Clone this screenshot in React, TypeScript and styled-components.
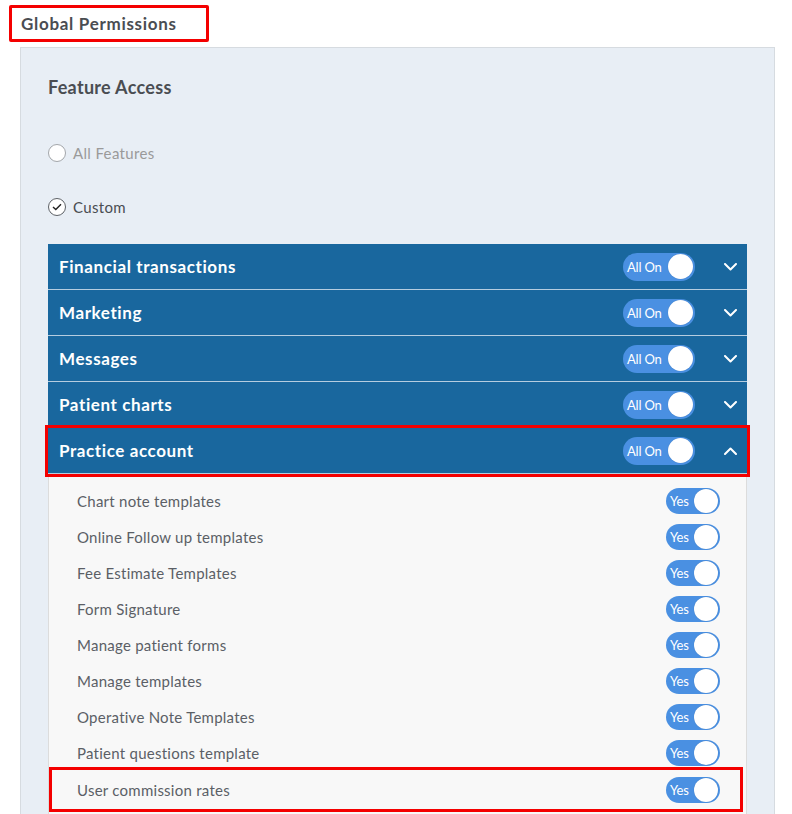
import React, { useState } from 'react';
import styled, { createGlobalStyle } from 'styled-components';

const GlobalStyle = createGlobalStyle`
  html, body {
    margin: 0;
    padding: 0;
    background: #fff;
    font-family: Lato, "Open Sans", "Liberation Sans", sans-serif;
  }
`;

interface Section {
  name: string;
  open?: boolean;
  highlight?: boolean;
}

interface Permission {
  label: string;
  highlight?: boolean;
}

const sections: Section[] = [
  { name: 'Financial transactions' },
  { name: 'Marketing' },
  { name: 'Messages' },
  { name: 'Patient charts' },
  { name: 'Practice account', open: true, highlight: true },
];

const permissions: Permission[] = [
  { label: 'Chart note templates' },
  { label: 'Online Follow up templates' },
  { label: 'Fee Estimate Templates' },
  { label: 'Form Signature' },
  { label: 'Manage patient forms' },
  { label: 'Manage templates' },
  { label: 'Operative Note Templates' },
  { label: 'Patient questions template' },
  { label: 'User commission rates', highlight: true },
];

const Page = styled.div`
  width: 792px;
  height: 814px;
  overflow: hidden;
  padding-top: 5px;
  box-sizing: border-box;
`;

const TitleBox = styled.div`
  margin-left: 9px;
  width: 200px;
  height: 37px;
  box-sizing: border-box;
  border: 3px solid #f40000;
  border-radius: 2px;
  display: flex;
  align-items: center;
  padding-left: 9px;
  font-size: 17px;
  font-weight: 700;
  letter-spacing: 0.7px;
  color: #4a4d52;
`;

const Panel = styled.div`
  margin: 5px 0 0 20px;
  width: 755px;
  min-height: 800px;
  box-sizing: border-box;
  background: #e8eef5;
  border: 1px solid #d6dbe0;
  padding: 28px 27px 0 27px;
`;

const SectionTitle = styled.div`
  font-size: 18px;
  font-weight: 700;
  letter-spacing: 0.3px;
  color: #4a4d52;
  line-height: 22px;
  margin-bottom: 44px;
`;

const RadioRow = styled.label<{ $muted?: boolean }>`
  display: flex;
  align-items: center;
  gap: 7px;
  height: 22px;
  font-size: 15px;
  letter-spacing: 0.35px;
  color: ${({ $muted }) => ($muted ? '#9a9a9a' : '#4a4d52')};
  margin-bottom: 32px;
`;

const RadioCircle = styled.span<{ $checked?: boolean }>`
  width: 18px;
  height: 18px;
  box-sizing: border-box;
  border-radius: 50%;
  background: #fff;
  border: 1px solid ${({ $checked }) => ($checked ? '#5d6166' : '#a3a6aa')};
  display: flex;
  align-items: center;
  justify-content: center;
`;

const Accordion = styled.div`
  margin-top: -6px;
  width: 699px;
`;

const Header = styled.div<{ $highlight?: boolean }>`
  height: 46px;
  box-sizing: border-box;
  background: #19679e;
  border-bottom: 1px solid #b5cde0;
  display: flex;
  align-items: center;
  padding: 0 10px 0 11px;
  color: #fff;
  font-size: 17px;
  font-weight: 700;
  letter-spacing: 0.6px;
  outline: ${({ $highlight }) => ($highlight ? '3px solid #f40000' : 'none')};
  position: relative;
  z-index: ${({ $highlight }) => ($highlight ? 1 : 0)};
`;

const HeaderTitle = styled.span`
  flex: 1;
`;

const Toggle = styled.button<{ $small?: boolean }>`
  width: ${({ $small }) => ($small ? '54px' : '72px')};
  height: ${({ $small }) => ($small ? '26px' : '28px')};
  border: none;
  border-radius: 14px;
  background: #4a90e2;
  padding: 0 2px 0 4px;
  display: flex;
  align-items: center;
  justify-content: space-between;
  cursor: pointer;
  color: #fff;
  font-family: inherit;
  font-size: 13px;
  font-weight: 400;
  letter-spacing: -0.2px;
`;

const Knob = styled.span<{ $small?: boolean }>`
  width: ${({ $small }) => ($small ? '24px' : '25px')};
  height: ${({ $small }) => ($small ? '24px' : '25px')};
  border-radius: 50%;
  background: #fff;
  box-shadow: 0 0 1px rgba(0, 0, 0, 0.2);
`;

const Chevron = styled.span`
  width: 14px;
  margin-left: 28px;
  display: flex;
  align-items: center;
  justify-content: center;
`;

const Content = styled.div`
  background: #f8f8f8;
  border-left: 1px solid #dcdcdc;
  border-right: 1px solid #dcdcdc;
  padding-top: 9px;
  min-height: 340px;
`;

const PermRow = styled.div<{ $highlight?: boolean }>`
  height: ${({ $highlight }) => ($highlight ? '39px' : '36px')};
  display: flex;
  align-items: center;
  justify-content: space-between;
  padding: ${({ $highlight }) => ($highlight ? '0 20px 0 25px' : '0 26px 0 28px')};
  margin: ${({ $highlight }) => ($highlight ? '-1px 6px 0 3px' : '0')};
  outline: ${({ $highlight }) => ($highlight ? '3px solid #f40000' : 'none')};
  font-size: 15px;
  letter-spacing: 0.25px;
  color: #5b5f66;
`;

const ChevronIcon: React.FC<{ up?: boolean }> = ({ up }) => (
  <svg width="13" height="8" viewBox="0 0 13 8" fill="none">
    <path
      d={up ? 'M1 7L6.5 1.5L12 7' : 'M1 1L6.5 6.5L12 1'}
      stroke="#fff"
      strokeWidth="2"
      strokeLinecap="round"
      strokeLinejoin="round"
    />
  </svg>
);

const App: React.FC = () => {
  const [mode, setMode] = useState<'all' | 'custom'>('custom');

  return (
    <Page>
      <GlobalStyle />
      <TitleBox>Global Permissions</TitleBox>
      <Panel>
        <SectionTitle>Feature Access</SectionTitle>
        <RadioRow $muted onClick={() => setMode('all')}>
          <RadioCircle $checked={mode === 'all'} />
          All Features
        </RadioRow>
        <RadioRow onClick={() => setMode('custom')}>
          <RadioCircle $checked={mode === 'custom'}>
            {mode === 'custom' && (
              <svg width="10" height="8" viewBox="0 0 10 8" fill="none">
                <path d="M1 4L3.8 6.6L9 1.2" stroke="#222" strokeWidth="1.4" />
              </svg>
            )}
          </RadioCircle>
          Custom
        </RadioRow>
        <Accordion>
          {sections.map((s) => (
            <React.Fragment key={s.name}>
              <Header $highlight={s.highlight}>
                <HeaderTitle>{s.name}</HeaderTitle>
                <Toggle>
                  All On
                  <Knob />
                </Toggle>
                <Chevron>
                  <ChevronIcon up={s.open} />
                </Chevron>
              </Header>
              {s.open && (
                <Content>
                  {permissions.map((p) => (
                    <PermRow key={p.label} $highlight={p.highlight}>
                      {p.label}
                      <Toggle $small>
                        Yes
                        <Knob $small />
                      </Toggle>
                    </PermRow>
                  ))}
                </Content>
              )}
            </React.Fragment>
          ))}
        </Accordion>
      </Panel>
    </Page>
  );
};

export default App;
